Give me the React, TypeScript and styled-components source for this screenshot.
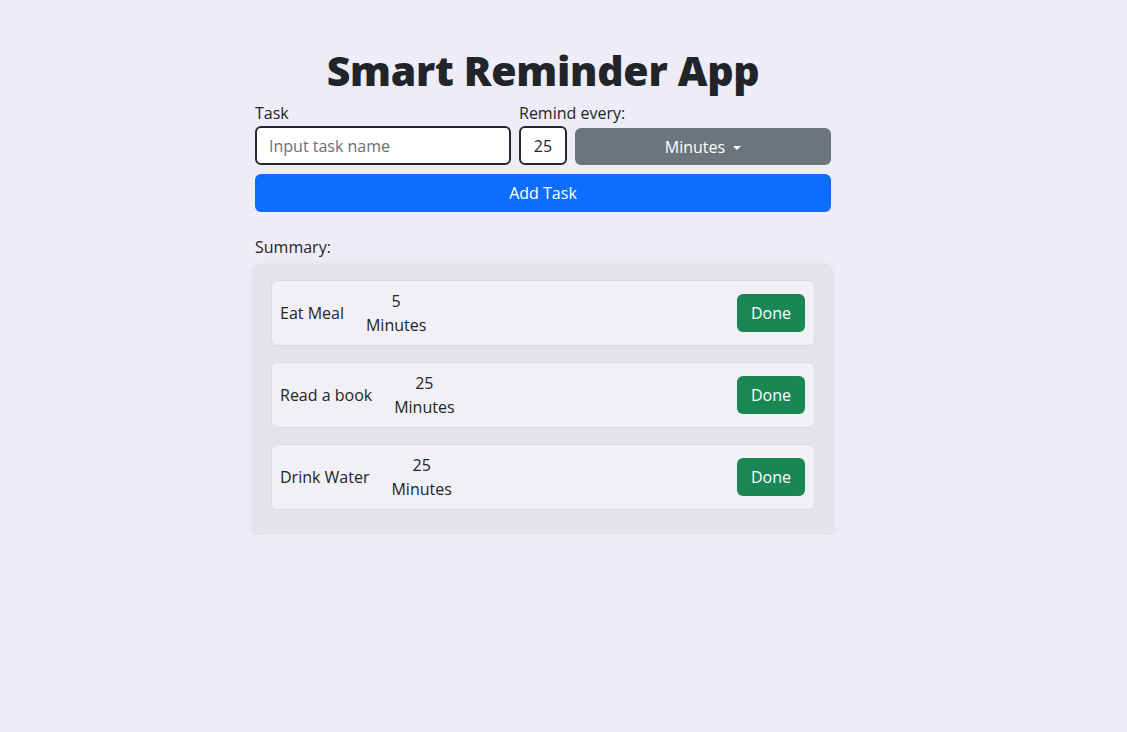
import React from 'react'
import styled, { createGlobalStyle } from 'styled-components'

const GlobalStyle = createGlobalStyle`
  body {
    margin: 0;
    background: #eeecf6;
    font-family: 'Open Sans', 'Liberation Sans', sans-serif;
    color: #212529;
  }
`

const Page = styled.div`
  width: 576px;
  margin-left: 255px;
  padding-top: 44px;
`

const Title = styled.h1`
  margin: 0 0 6px;
  text-align: center;
  font-size: 41px;
  font-weight: 800;
  letter-spacing: -0.3px;
  line-height: 52px;
  color: #212529;
`

const Form = styled.div`
  display: grid;
  grid-template-columns: 256px 48px 1fr;
  column-gap: 8px;
`

const Label = styled.label<{ span?: number }>`
  grid-column: span ${(p) => p.span || 1};
  font-size: 16px;
  line-height: 22px;
  margin-bottom: 2px;
`

const Input = styled.input`
  box-sizing: border-box;
  height: 39px;
  border: 2px solid #25272c;
  border-radius: 6px;
  padding: 0 12px;
  font: inherit;
  font-size: 16px;
  background: #fff;
  color: #212529;
  outline: none;
  &::placeholder {
    color: #6c6e72;
  }
`

const NumberInput = styled(Input)`
  padding: 0;
  text-align: center;
`

const Button = styled.button<{ $bg: string }>`
  box-sizing: border-box;
  border: none;
  border-radius: 6px;
  background: ${(p) => p.$bg};
  color: #fff;
  font: inherit;
  font-size: 16px;
  cursor: pointer;
`

const Dropdown = styled(Button)`
  height: 37px;
  margin-top: 2px;
  display: flex;
  align-items: center;
  justify-content: center;
  gap: 8px;
`

const Caret = styled.span`
  width: 0;
  height: 0;
  border-left: 4px solid transparent;
  border-right: 4px solid transparent;
  border-top: 4px solid #fff;
  margin-top: 2px;
`

const AddButton = styled(Button)`
  width: 100%;
  height: 38px;
  margin-top: 9px;
`

const SummaryLabel = styled.div`
  margin-top: 24px;
  font-size: 16px;
  line-height: 22px;
`

const Card = styled.div`
  margin-top: 6px;
  background: #e3e3e8;
  border-radius: 6px;
  box-shadow: 0 2px 8px rgba(0, 0, 0, 0.12);
  padding: 16px 16px 25px;
  display: flex;
  flex-direction: column;
  gap: 16px;
`

const Item = styled.div`
  display: flex;
  align-items: center;
  height: 66px;
  box-sizing: border-box;
  padding: 0 9px 0 8px;
  background: #f0f0f5;
  border: 1px solid #d9d9de;
  border-radius: 6px;
  font-size: 16px;
`

const TaskName = styled.span`
  margin-right: 10px;
`

const Interval = styled.div`
  display: flex;
  flex-direction: column;
  align-items: center;
  line-height: 24px;
  padding: 0 12px;
`

const DoneButton = styled(Button)`
  margin-left: auto;
  height: 38px;
  padding: 0 14px;
  font-size: 16px;
`

const tasks = [
  { name: 'Eat Meal', every: 5 },
  { name: 'Read a book', every: 25 },
  { name: 'Drink Water', every: 25 },
]

const App = () => {
  return (
    <Page>
      <GlobalStyle />
      <Title>Smart Reminder App</Title>
      <Form>
        <Label>Task</Label>
        <Label span={2}>Remind every:</Label>
        <Input placeholder="Input task name" />
        <NumberInput defaultValue="25" />
        <Dropdown $bg="#6c757d">
          Minutes <Caret />
        </Dropdown>
      </Form>
      <AddButton $bg="#0d6efd">Add Task</AddButton>
      <SummaryLabel>Summary:</SummaryLabel>
      <Card>
        {tasks.map((t) => (
          <Item key={t.name}>
            <TaskName>{t.name}</TaskName>
            <Interval>
              <span>{t.every}</span>
              <span>Minutes</span>
            </Interval>
            <DoneButton $bg="#198754">Done</DoneButton>
          </Item>
        ))}
      </Card>
    </Page>
  )
}

export default App
